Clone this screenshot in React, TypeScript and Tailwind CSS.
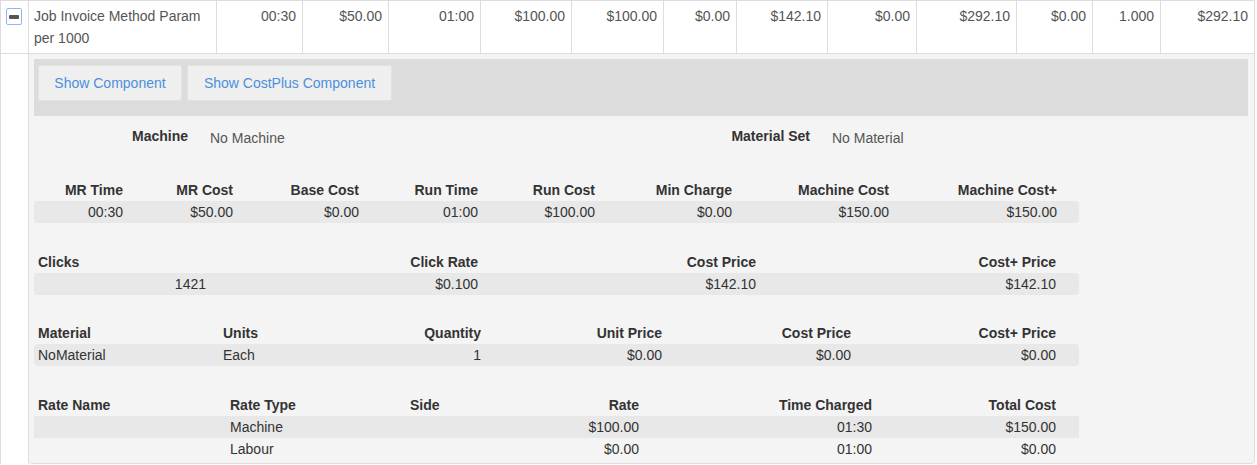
const topCells: { w: string; text: string }[] = [
  { w: "w-[86px]", text: "00:30" },
  { w: "w-[86px]", text: "$50.00" },
  { w: "w-[92px]", text: "01:00" },
  { w: "w-[91px]", text: "$100.00" },
  { w: "w-[92px]", text: "$100.00" },
  { w: "w-[73px]", text: "$0.00" },
  { w: "w-[91px]", text: "$142.10" },
  { w: "w-[89px]", text: "$0.00" },
  { w: "w-[100px]", text: "$292.10" },
  { w: "w-[76px]", text: "$0.00" },
  { w: "w-[68px]", text: "1.000" },
  { w: "w-[94px]", text: "$292.10" },
]

function MinusToggle() {
  return (
    <div className="mt-[7px] ml-[5px] flex h-[17px] w-[16px] items-center justify-center rounded-[2px] border border-[#8fb8f0] bg-white">
      <div className="h-[4px] w-[10px] rounded-[1px] bg-[#555]"></div>
    </div>
  )
}

export default function App() {
  return (
    <div className="w-[1257px] bg-white text-[14px] leading-[22px] text-[#333]" style={{ fontFamily: '"Liberation Sans", Arial, sans-serif' }}>
      {/* main row */}
      <div className="flex h-[54px] border-t border-b border-l border-[#ddd] w-[1255px] text-[#555]">
        <div className="w-[28px] shrink-0 border-r border-[#ddd]">
          <MinusToggle />
        </div>
        <div className="w-[188px] shrink-0 border-r border-[#ddd] pl-[5px] pt-[4px]">
          Job Invoice Method Param per 1000
        </div>
        {topCells.map((c, i) => (
          <div key={i} className={`${c.w} shrink-0 border-r border-[#ddd] pr-[6px] pt-[4px] text-right`}>
            {c.text}
          </div>
        ))}
      </div>

      {/* detail row */}
      <div className="flex w-[1255px] border-l border-[#ddd]">
        <div className="w-[28px] shrink-0 border-r border-[#ddd]"></div>
        <div className="flex-1 rounded-b-[4px] border-r border-b border-[#ddd] bg-[#f4f4f4] pl-[5px] pr-[6px] pt-[5px] pb-[3px]">
          {/* tab bar */}
          <div className="flex gap-[5px] bg-[#dcdcdc] pl-[4px] pt-[6px] pb-[15px]">
            <button className="h-[36px] w-[144px] rounded-[2px] border border-[#e2e2e2] bg-[#efefef] text-[#4a90dd]">Show Component</button>
            <button className="h-[36px] w-[205px] rounded-[2px] border border-[#e2e2e2] bg-[#efefef] text-[#4a90dd]">Show CostPlus Component</button>
          </div>

          {/* machine / material */}
          <div className="mt-[9px] flex">
            <div className="w-[154px] text-right font-bold">Machine</div>
            <div className="w-[444px] pl-[22px] pt-[2px] text-[#555]">No Machine</div>
            <div className="w-[178px] text-right font-bold">Material Set</div>
            <div className="pl-[22px] pt-[2px] text-[#555]">No Material</div>
          </div>

          {/* machine costs */}
          <div className="mt-[30px] w-[1045px]">
            <div className="grid grid-cols-[89px_110px_126px_119px_117px_137px_157px_168px] pr-[22px] font-bold text-right">
              <div>MR Time</div>
              <div>MR Cost</div>
              <div>Base Cost</div>
              <div>Run Time</div>
              <div>Run Cost</div>
              <div>Min Charge</div>
              <div>Machine Cost</div>
              <div>Machine Cost+</div>
            </div>
            <div className="grid grid-cols-[89px_110px_126px_119px_117px_137px_157px_168px] rounded-[4px] bg-[#e8e8e8] pr-[22px] text-right">
              <div>00:30</div>
              <div>$50.00</div>
              <div>$0.00</div>
              <div>01:00</div>
              <div>$100.00</div>
              <div>$0.00</div>
              <div>$150.00</div>
              <div>$150.00</div>
            </div>
          </div>

          {/* clicks */}
          <div className="mt-[28px] w-[1045px]">
            <div className="grid grid-cols-[172px_272px_278px_300px] pr-[23px] font-bold text-right">
              <div className="pl-[4px] text-left">Clicks</div>
              <div>Click Rate</div>
              <div>Cost Price</div>
              <div>Cost+ Price</div>
            </div>
            <div className="grid grid-cols-[172px_272px_278px_300px] rounded-[4px] bg-[#e8e8e8] pr-[23px] text-right">
              <div>1421</div>
              <div>$0.100</div>
              <div>$142.10</div>
              <div>$142.10</div>
            </div>
          </div>

          {/* materials */}
          <div className="mt-[27px] w-[1045px]">
            <div className="grid grid-cols-[185px_81px_181px_181px_189px_205px] pr-[23px] font-bold text-right">
              <div className="pl-[4px] text-left">Material</div>
              <div className="pl-[4px] text-left">Units</div>
              <div>Quantity</div>
              <div>Unit Price</div>
              <div>Cost Price</div>
              <div>Cost+ Price</div>
            </div>
            <div className="grid grid-cols-[185px_81px_181px_181px_189px_205px] rounded-[4px] bg-[#e8e8e8] pr-[23px] text-right">
              <div className="pl-[4px] text-left">NoMaterial</div>
              <div className="pl-[4px] text-left">Each</div>
              <div>1</div>
              <div>$0.00</div>
              <div>$0.00</div>
              <div>$0.00</div>
            </div>
          </div>

          {/* rates */}
          <div className="mt-[28px] w-[1045px]">
            <div className="grid grid-cols-[192px_180px_94px_139px_233px_184px] pr-[23px] font-bold text-right">
              <div className="pl-[4px] text-left">Rate Name</div>
              <div className="pl-[4px] text-left">Rate Type</div>
              <div className="pl-[4px] text-left">Side</div>
              <div>Rate</div>
              <div>Time Charged</div>
              <div>Total Cost</div>
            </div>
            <div className="grid grid-cols-[192px_180px_94px_139px_233px_184px] bg-[#e8e8e8] pr-[23px] text-right">
              <div className="pl-[4px] text-left"></div>
              <div className="pl-[4px] text-left">Machine</div>
              <div className="pl-[4px] text-left"></div>
              <div>$100.00</div>
              <div>01:30</div>
              <div>$150.00</div>
            </div>
            <div className="grid grid-cols-[192px_180px_94px_139px_233px_184px] pr-[23px] text-right">
              <div className="pl-[4px] text-left"></div>
              <div className="pl-[4px] text-left">Labour</div>
              <div className="pl-[4px] text-left"></div>
              <div>$0.00</div>
              <div>01:00</div>
              <div>$0.00</div>
            </div>
          </div>
        </div>
      </div>
    </div>
  )
}
